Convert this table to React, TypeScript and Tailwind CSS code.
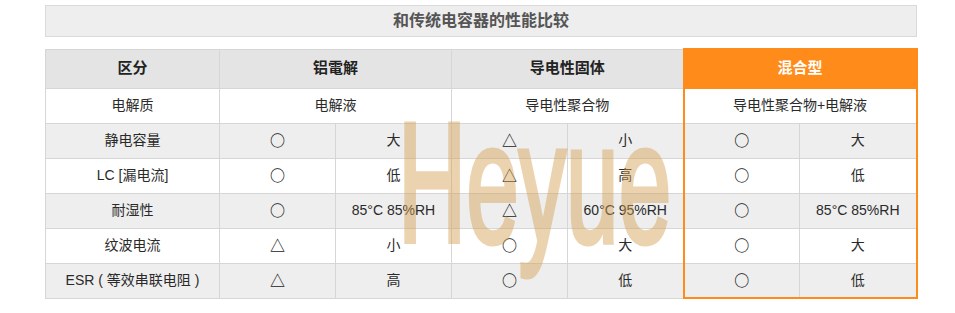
import React from 'react';

const FONT = '"Liberation Sans", Arial, "Noto Sans CJK SC", sans-serif';
const SYM = '"Noto Sans CJK SC", "DejaVu Sans", sans-serif';

const rows = [
  ['静电容量', '○', '大', '△', '小', '○', '大'],
  ['LC [漏电流]', '○', '低', '△', '高', '○', '低'],
  ['耐湿性', '○', '85°C 85%RH', '△', '60°C 95%RH', '○', '85°C 85%RH'],
  ['纹波电流', '△', '小', '○', '大', '○', '大'],
  ['ESR ( 等效串联电阻 )', '△', '高', '○', '低', '○', '低'],
];

const isSym = (s: string) => s === '○' || s === '△';

function Txt({ s }: { s: string }) {
  if (isSym(s)) return <span className="text-[15px] text-[#222222] font-bold" style={{ fontFamily: SYM }}>{s}</span>;
  return <>{s}</>;
}

export default function App() {
  const cell = 'border border-[#d6d6d6] text-center align-middle p-0';
  const last = rows.length - 1;
  return (
    <div className="relative w-[955px] h-[313px] bg-white overflow-hidden" style={{ fontFamily: FONT }}>
      <div className="pt-[5px] pl-[45px]">
        <div className="w-[872px] h-[32px] bg-[#eeeeee] border border-[#dadada] flex items-center justify-center text-[16px] font-bold text-[#555555]">
          和传统电容器的性能比较
        </div>
        <table className="mt-[11px] w-[871px] border-collapse table-fixed text-[14px] text-[#2a2a2a]">
          <colgroup>
            <col className="w-[174px]" />
            <col className="w-[116px]" />
            <col className="w-[116px]" />
            <col className="w-[116px]" />
            <col className="w-[116px]" />
            <col className="w-[116px]" />
            <col className="w-[117px]" />
          </colgroup>
          <tbody>
            <tr className="h-[39px] bg-[#e4e4e4] text-[15px] font-bold text-[#222222]">
              <td className={cell}>区分</td>
              <td className={cell} colSpan={2}>铝電解</td>
              <td className={cell} colSpan={2}>导电性固体</td>
              <td colSpan={2} className="border-2 border-[#ff8c1a] bg-[#ff8c1a] text-white text-center align-middle">混合型</td>
            </tr>
            <tr className="h-[35px] bg-white">
              <td className={cell}>电解质</td>
              <td className={cell} colSpan={2}>电解液</td>
              <td className={cell} colSpan={2}>导电性聚合物</td>
              <td colSpan={2} className="border border-[#d6d6d6] border-x-2 border-x-[#ff8c1a] text-center align-middle">导电性聚合物+电解液</td>
            </tr>
            {rows.map((r, i) => (
              <tr key={i} className={`h-[35px] ${i % 2 === 0 ? 'bg-[#eeeeee]' : 'bg-white'}`}>
                {r.slice(0, 5).map((c, j) => (
                  <td key={j} className={cell}><Txt s={c} /></td>
                ))}
                <td className={`border border-[#d6d6d6] border-l-2 border-l-[#ff8c1a] text-center align-middle ${i === last ? 'border-b-2 border-b-[#ff8c1a]' : ''}`}><Txt s={r[5]} /></td>
                <td className={`border border-[#d6d6d6] border-r-2 border-r-[#ff8c1a] text-center align-middle ${i === last ? 'border-b-2 border-b-[#ff8c1a]' : ''}`}><Txt s={r[6]} /></td>
              </tr>
            ))}
          </tbody>
        </table>
      </div>
      {/* watermark */}
      <div
        className="absolute left-[398px] top-[98px] text-[170px] leading-none text-[#d6a050] opacity-45 origin-left scale-x-[0.556] pointer-events-none whitespace-nowrap [-webkit-text-stroke:5px_#d6a050]"
        style={{ fontFamily: '"Liberation Sans", Arial, sans-serif' }}
      >
        Heyue
      </div>
    </div>
  );
}
